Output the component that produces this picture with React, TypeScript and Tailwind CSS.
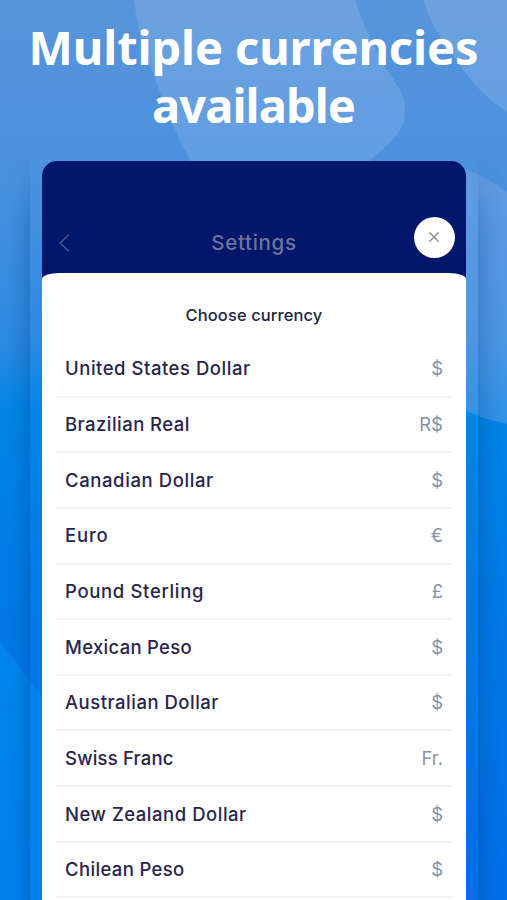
import React from "react";

const currencies = [
  { name: "United States Dollar", symbol: "$", tracking: "tracking-[0.53px]" },
  { name: "Brazilian Real", symbol: "R$", tracking: "tracking-[0.45px]" },
  { name: "Canadian Dollar", symbol: "$", tracking: "tracking-[0.6px]" },
  { name: "Euro", symbol: "€", tracking: "tracking-[0.8px]" },
  { name: "Pound Sterling", symbol: "£", tracking: "tracking-[0.66px]" },
  { name: "Mexican Peso", symbol: "$", tracking: "tracking-[0.29px]" },
  { name: "Australian Dollar", symbol: "$", tracking: "tracking-[0.5px]" },
  { name: "Swiss Franc", symbol: "Fr.", tracking: "tracking-[0.18px]" },
  { name: "New Zealand Dollar", symbol: "$", tracking: "tracking-[0.52px]" },
  { name: "Chilean Peso", symbol: "$", tracking: "tracking-[0.35px]" },
];

function Backdrop() {
  return (
    <svg className="absolute inset-0" width="507" height="900" viewBox="0 0 507 900" aria-hidden="true">
      <defs>
        <linearGradient id="sky" x1="0" y1="0" x2="0" y2="1">
          <stop offset="0" stopColor="#5894db" />
          <stop offset="0.2" stopColor="#4a91df" />
          <stop offset="0.38" stopColor="#2a8ae2" />
          <stop offset="0.46" stopColor="#0085e6" />
          <stop offset="0.68" stopColor="#007ae7" />
          <stop offset="1" stopColor="#006fe8" />
        </linearGradient>
        <linearGradient id="shadeLeft">
          <stop offset="0" stopColor="#003b80" stopOpacity="0" />
          <stop offset="0.5" stopColor="#003b80" stopOpacity="0.07" />
          <stop offset="1" stopColor="#003b80" stopOpacity="0.25" />
        </linearGradient>
        <linearGradient id="shadeRight">
          <stop offset="0" stopColor="#003b80" stopOpacity="0.22" />
          <stop offset="0.5" stopColor="#003b80" stopOpacity="0.07" />
          <stop offset="1" stopColor="#003b80" stopOpacity="0" />
        </linearGradient>
        <linearGradient id="fade" x1="0" y1="0" x2="0" y2="1">
          <stop offset="0" stopColor="#000" />
          <stop offset="0.1" stopColor="#fff" />
        </linearGradient>
        <mask id="shadeMask">
          <rect y="158" width="507" height="742" fill="url(#fade)" />
        </mask>
      </defs>
      <rect width="507" height="900" fill="url(#sky)" />
      <path d="M134 0Q140 45 154 75Q170 125 192 164H367Q375 155 389 144Q405 128 405 113V104Q402 90 389 73Q372 48 355 0Z" fill="#fff" fillOpacity="0.12" />
      <path d="M423 0Q432 28 449 49Q475 92 507 112V0Z" fill="#fff" fillOpacity="0.12" />
      <path d="M460 169Q476 170 507 192V424Q482 419 460 408Z" fill="#8aabea" fillOpacity="0.36" />
      <path d="M0 644Q17 660 42 698V900H0Z" fill="#009bf5" fillOpacity="0.4" />
      <g mask="url(#shadeMask)">
        <rect x="6" y="158" width="24" height="742" fill="url(#shadeLeft)" />
        <rect x="478" y="158" width="25" height="742" fill="url(#shadeRight)" />
      </g>
    </svg>
  );
}

export default function App() {
  return (
    <div className="relative h-[900px] w-[507px] overflow-hidden font-['Inter','Liberation_Sans',sans-serif]">
      <Backdrop />
      <div className="relative flex h-full flex-col">
        <h1 className="flex h-[161px] shrink-0 flex-col items-center pt-[18px] text-center font-['Noto_Sans','Open_Sans',sans-serif] text-[47px] leading-[58px] font-bold text-white">
          <span className="tracking-[-0.1px] whitespace-nowrap">Multiple currencies</span>
          <span className="tracking-[-0.9px] whitespace-nowrap">available</span>
        </h1>
        <section className="mr-[41px] ml-[42px] flex min-h-0 w-[424px] flex-1 flex-col overflow-hidden rounded-t-[15px] bg-[#00176b]">
          <header className="flex h-[112px] shrink-0 items-start justify-between pr-[11px] pl-[17px]">
            <svg className="mt-[73px]" width="11" height="18" viewBox="0 0 11 18" fill="none" stroke="#4a5590" strokeWidth="1.5" strokeLinecap="round">
              <path d="M9.5 1L1.3 9l8.2 8" />
            </svg>
            <h2 className="mt-[69px] ml-[24px] text-[20.5px] leading-[26px] font-medium tracking-[0.7px] text-[#6e7499]">Settings</h2>
            <button className="mt-[55.5px] flex size-[41px] items-center justify-center rounded-full bg-white" aria-label="Close">
              <svg width="12" height="12" viewBox="0 0 12 12" fill="none" stroke="#8c969f" strokeWidth="1.5">
                <path d="M1.2 1.2l9.6 9.6M10.8 1.2L1.2 10.8" />
              </svg>
            </button>
          </header>
          <main className="-mb-2 flex flex-1 flex-col bg-white [border-top-left-radius:17px_6px] [border-top-right-radius:17px_6px]">
            <h3 className="mt-[30px] mb-[15px] text-center text-[16.5px] leading-[24px] font-medium tracking-[0.1px] text-[#241f46]">Choose currency</h3>
            <ul className="mx-[14px]">
              {currencies.map((c) => (
                <li key={c.name} className="flex h-[55.65px] items-center justify-between border-b-2 border-[#f3f3f5] px-[9px] pt-px text-[18.5px]">
                  <span className={"font-medium text-[#2a254c] whitespace-nowrap " + c.tracking}>{c.name}</span>
                  <span className="text-[#8792a6]">{c.symbol}</span>
                </li>
              ))}
            </ul>
          </main>
        </section>
      </div>
    </div>
  );
}
